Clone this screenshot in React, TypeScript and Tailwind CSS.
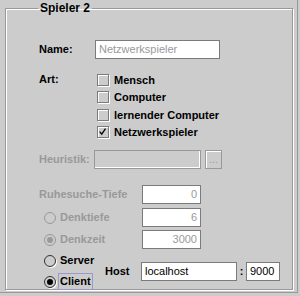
import React from 'react';

const font = { fontFamily: '"Liberation Sans", Arial, sans-serif' };

// etched field border like the old Swing Metal look
const fieldCls = 'h-[19px] border border-[#7b7b7b] shadow-[inset_-1px_-1px_0_#ffffff] text-[11px] px-[3px] flex items-center';

const CheckBox = ({ checked, label }: { checked?: boolean; label: string }) => (
  <div className="flex items-center h-[17.5px]">
    <span className="relative w-[12px] h-[12px] border border-[#7b7b7b] shadow-[inset_1px_1px_0_#ffffff,1px_1px_0_#ffffff] bg-[#cccccc]">
      {checked && (
        <svg viewBox="0 0 12 12" className="absolute inset-0 w-[10px] h-[10px]">
          <path d="M2 5.5 L4.5 8.5 L9 2" fill="none" stroke="#000" strokeWidth="1.6" />
        </svg>
      )}
    </span>
    <span className="ml-[5px] text-[11px] font-bold text-black">{label}</span>
  </div>
);

const Radio = ({ checked, disabled, label, focused }: { checked?: boolean; disabled?: boolean; label: string; focused?: boolean }) => (
  <div className="flex items-center">
    <span
      className={`relative w-[12px] h-[12px] rounded-full border flex items-center justify-center ${
        disabled ? 'border-[#999999]' : 'border-[#333333] shadow-[1px_1px_0_#ffffff]'
      }`}
    >
      {checked && (
        <span className={`w-[6px] h-[6px] rounded-full ${disabled ? 'bg-[#999999]' : 'bg-black'}`} />
      )}
    </span>
    <span
      className={`ml-[3px] px-[1px] text-[11px] font-bold leading-[15px] ${
        disabled ? 'text-[#999999]' : 'text-black'
      } ${focused ? 'outline outline-1 outline-[#9999cc]' : ''}`}
    >
      {label}
    </span>
  </div>
);

const App = () => {
  return (
    <div className="w-[300px] h-[296px] bg-[#cccccc] relative overflow-hidden" style={font}>
      <div className="absolute right-[2px] top-0 bottom-[3px] w-[1px] bg-[#999999]" />
      <div className="absolute left-0 right-[2px] bottom-[3px] h-[1px] bg-[#999999]" />

      <div className="pl-[5px] pr-[7px] pt-[2px]">
        <fieldset className="h-[288px] border border-[#999999] shadow-[inset_1px_1px_0_#ffffff,1px_1px_0_#ffffff] pl-[33px] pr-[8px]">
          <legend className="ml-[-1px] px-[2px] text-[12px] font-bold text-black leading-[13px]">Spieler 2</legend>

          {/* Name */}
          <div className="flex items-center mt-[25px]">
            <span className="w-[56px] text-[11px] font-bold text-black">Name:</span>
            <div className={`${fieldCls} w-[125px] bg-white text-[#999999]`}>Netzwerkspieler</div>
          </div>

          {/* Art */}
          <div className="flex mt-[12px]">
            <span className="w-[58px] text-[11px] font-bold text-black leading-[17.5px]">Art:</span>
            <div className="flex flex-col">
              <CheckBox label="Mensch" />
              <CheckBox label="Computer" />
              <CheckBox label="lernender Computer" />
              <CheckBox checked label="Netzwerkspieler" />
            </div>
          </div>

          {/* Heuristik */}
          <div className="flex items-center mt-[9px]">
            <span className="w-[55px] text-[11px] font-bold text-[#999999]">Heuristik:</span>
            <div className={`${fieldCls} w-[107px] bg-[#cccccc] border-[#999999]`} />
            <div className="ml-[4px] w-[17px] h-[19px] border border-[#999999] shadow-[inset_1px_1px_0_#ffffff] text-[10px] text-[#999999] flex items-end justify-center pb-[3px] leading-none">
              ...
            </div>
          </div>

          {/* Ruhesuche */}
          <div className="flex items-center mt-[16px]">
            <span className="w-[103px] text-[11px] font-bold text-[#999999]">Ruhesuche-Tiefe</span>
            <div className={`${fieldCls} w-[59px] bg-white text-[#999999] justify-end`}>0</div>
          </div>

          <div className="flex items-center mt-[4px]">
            <div className="w-[103px] pl-[5px]">
              <Radio disabled label="Denktiefe" />
            </div>
            <div className={`${fieldCls} w-[59px] bg-white text-[#999999] justify-end`}>6</div>
          </div>

          <div className="flex items-center mt-[3px]">
            <div className="w-[103px] pl-[5px]">
              <Radio disabled checked label="Denkzeit" />
            </div>
            <div className={`${fieldCls} w-[59px] bg-white text-[#999999] justify-end`}>3000</div>
          </div>

          {/* Server / Client */}
          <div className="flex items-center mt-[4px]">
            <div className="flex flex-col gap-[6px] w-[66px] pl-[5px]">
              <Radio label="Server" />
              <Radio checked focused label="Client" />
            </div>
            <span className="w-[36px] text-[11px] font-bold text-black">Host</span>
            <div className={`${fieldCls} w-[96px] bg-white text-black`}>localhost</div>
            <span className="w-[9px] text-center text-[11px] font-bold text-black">:</span>
            <div className={`${fieldCls} w-[34px] bg-white text-black`}>9000</div>
          </div>
        </fieldset>
      </div>
    </div>
  );
};

export default App;
